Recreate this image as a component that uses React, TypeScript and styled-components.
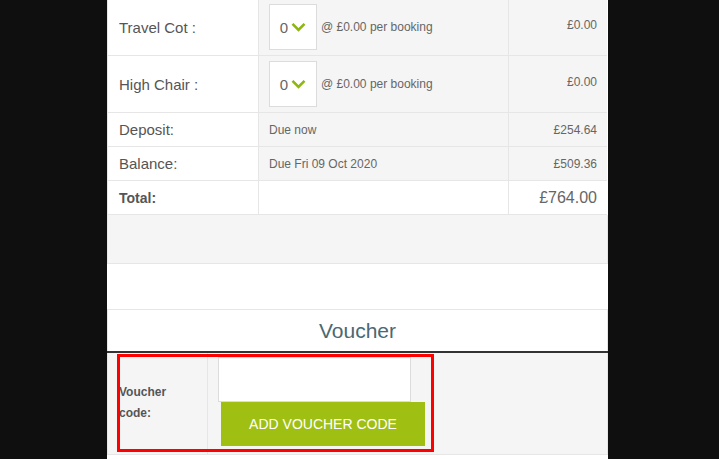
import styled, { createGlobalStyle } from 'styled-components';

const GlobalStyle = createGlobalStyle`
  html, body {
    margin: 0;
    padding: 0;
    background: #0f0f0f;
    font-family: "Liberation Sans", Arial, sans-serif;
  }
`;

const Page = styled.div`
  width: 501px;
  margin: -1px 0 0 107px;
  background: #fff;
  height: 461px;
  overflow: hidden;
`;

const Table = styled.div`
  display: grid;
  grid-template-columns: 150px 250px 99px;
  border-left: 1px solid #e6e6e6;
  border-right: 1px solid #e6e6e6;
  width: 500px;
`;

const Cell = styled.div<{ $shade?: boolean; $h: number; $align?: 'right' }>`
  height: ${({ $h }) => $h}px;
  box-sizing: border-box;
  background: ${({ $shade }) => ($shade ? '#f5f5f5' : '#fff')};
  border-bottom: 1px solid #e6e6e6;
  border-left: 1px solid #e6e6e6;
  &:nth-child(3n + 1) {
    border-left: none;
    padding-left: 11px;
  }
  display: flex;
  align-items: center;
  justify-content: ${({ $align }) => ($align === 'right' ? 'flex-end' : 'flex-start')};
  padding: 0 10px;
  color: #555;
`;

const Label = styled.span<{ $bold?: boolean }>`
  font-size: ${({ $bold }) => ($bold ? '14px' : '15px')};
  font-weight: ${({ $bold }) => ($bold ? 700 : 400)};
  color: #555;
`;

const SmallText = styled.span`
  font-size: 12px;
  color: #666;
`;

const Amount = styled.span<{ $big?: boolean; $lift?: boolean }>`
  font-size: ${({ $big }) => ($big ? '16px' : '12px')};
  color: #666;
  margin-top: ${({ $lift }) => ($lift ? '-4px' : '0')};
`;

const Select = styled.div`
  width: 48px;
  height: 46px;
  box-sizing: border-box;
  border: 1px solid #dcdcdc;
  background: #fff;
  display: flex;
  align-items: center;
  justify-content: center;
  gap: 3px;
  margin-right: 4px;
  font-size: 15px;
  color: #666;
`;

const Spacer = styled.div`
  height: 49px;
  box-sizing: border-box;
  background: #f5f5f5;
  border: 1px solid #e6e6e6;
  border-top: none;
`;

const Gap = styled.div`
  height: 45px;
`;

const VoucherHead = styled.div`
  height: 42px;
  box-sizing: border-box;
  border: 1px solid #e6e6e6;
  border-bottom: none;
  display: flex;
  align-items: center;
  justify-content: center;
  font-size: 21px;
  color: #4b6872;
  padding-top: 1px;
`;

const Rule = styled.div`
  height: 2px;
  background: #333;
`;

const VoucherRow = styled.div`
  position: relative;
  display: grid;
  grid-template-columns: 100px 1fr;
  height: 102px;
  box-sizing: border-box;
  background: #f5f5f5;
  border: 1px solid #e6e6e6;
  border-top: none;
`;

const VoucherLabel = styled.div`
  border-right: 1px solid #e6e6e6;
  display: flex;
  align-items: center;
  padding: 0 0 2px 11px;
  font-size: 12px;
  font-weight: 700;
  line-height: 21px;
  color: #555;
`;

const VoucherField = styled.div`
  display: flex;
  flex-direction: column;
  align-items: flex-start;
  padding: 4px 0 0 10px;
`;

const CodeInput = styled.input`
  width: 193px;
  height: 45px;
  box-sizing: border-box;
  border: 1px solid #dcdcdc;
  background: #fff;
  outline: none;
  margin: 0;
`;

const AddButton = styled.button`
  width: 204px;
  height: 44px;
  margin-left: 3px;
  border: none;
  background: #9fbf12;
  color: #fff;
  font-family: "Liberation Sans", Arial, sans-serif;
  font-size: 14px;
  cursor: pointer;
`;

const Highlight = styled.div`
  position: absolute;
  left: 9px;
  top: 1px;
  width: 317px;
  height: 98px;
  box-sizing: border-box;
  border: 3px solid #ff0000;
  pointer-events: none;
`;

function Chevron() {
  return (
    <svg width="15" height="10" viewBox="0 0 15 10">
      <path d="M1.5 1.8 L7.5 7.8 L13.5 1.8" fill="none" stroke="#8db60f" strokeWidth="2.6" />
    </svg>
  );
}

const extras = ['Travel Cot :', 'High Chair :'];

const payments = [
  { label: 'Deposit:', note: 'Due now', amount: '£254.64' },
  { label: 'Balance:', note: 'Due Fri 09 Oct 2020', amount: '£509.36' },
];

export default function App() {
  return (
    <>
      <GlobalStyle />
      <Page>
        <Table>
          {extras.map((name) => [
            <Cell key={name + 'a'} $h={57}>
              <Label>{name}</Label>
            </Cell>,
            <Cell key={name + 'b'} $h={57} $shade>
              <Select>
                0<Chevron />
              </Select>
              <SmallText>@ £0.00 per booking</SmallText>
            </Cell>,
            <Cell key={name + 'c'} $h={57} $shade $align="right">
              <Amount $lift>£0.00</Amount>
            </Cell>,
          ])}
          {payments.map((p) => [
            <Cell key={p.label + 'a'} $h={34}>
              <Label>{p.label}</Label>
            </Cell>,
            <Cell key={p.label + 'b'} $h={34} $shade>
              <SmallText>{p.note}</SmallText>
            </Cell>,
            <Cell key={p.label + 'c'} $h={34} $shade $align="right">
              <Amount>{p.amount}</Amount>
            </Cell>,
          ])}
          <Cell $h={34}>
            <Label $bold>Total:</Label>
          </Cell>
          <Cell $h={34} />
          <Cell $h={34} $align="right">
            <Amount $big>£764.00</Amount>
          </Cell>
        </Table>
        <Spacer />
        <Gap />
        <VoucherHead>Voucher</VoucherHead>
        <Rule />
        <VoucherRow>
          <VoucherLabel>
            Voucher
            <br />
            code:
          </VoucherLabel>
          <VoucherField>
            <CodeInput type="text" />
            <AddButton>ADD VOUCHER CODE</AddButton>
          </VoucherField>
          <Highlight />
        </VoucherRow>
      </Page>
    </>
  );
}
